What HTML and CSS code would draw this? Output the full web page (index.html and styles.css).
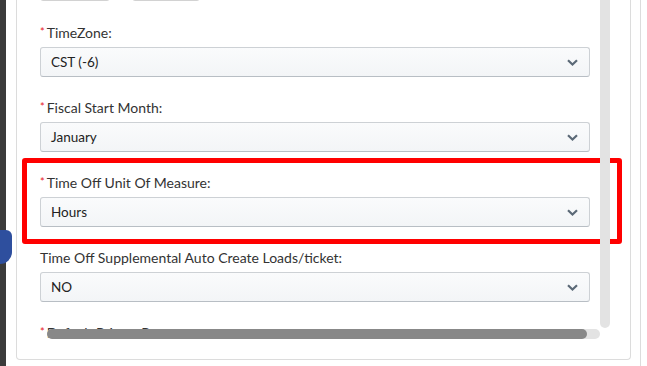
FILE: index.html
```html
<!DOCTYPE html>
<html lang="en">
<head>
    <meta charset="UTF-8">
    <meta name="viewport" content="width=device-width, initial-scale=1.0">
    <title>Settings</title>
    <link rel="stylesheet" href="styles.css">
</head>
<body>
    <div class="strip"></div>
    <div class="gutter"></div>
    <div class="panel">
        <div class="scroll-area">
            <div class="content">
                <div class="btn-row">
                    <div class="btn-box wide"></div>
                    <div class="btn-box"></div>
                </div>

                <div class="field">
                    <div class="label"><span class="req">*</span>TimeZone:</div>
                    <div class="select">
                        <span>CST (-6)</span>
                        <svg class="chevron" width="11" height="7" viewBox="0 0 11 7"><path d="M1 1.2 L5.5 5.5 L10 1.2" fill="none" stroke="#5b6977" stroke-width="2.2"/></svg>
                    </div>
                </div>

                <div class="field">
                    <div class="label"><span class="req">*</span>Fiscal Start Month:</div>
                    <div class="select">
                        <span>January</span>
                        <svg class="chevron" width="11" height="7" viewBox="0 0 11 7"><path d="M1 1.2 L5.5 5.5 L10 1.2" fill="none" stroke="#5b6977" stroke-width="2.2"/></svg>
                    </div>
                </div>

                <div class="field highlighted">
                    <div class="label"><span class="req">*</span>Time Off Unit Of Measure:</div>
                    <div class="select">
                        <span>Hours</span>
                        <svg class="chevron" width="11" height="7" viewBox="0 0 11 7"><path d="M1 1.2 L5.5 5.5 L10 1.2" fill="none" stroke="#5b6977" stroke-width="2.2"/></svg>
                    </div>
                    <div class="red-box"></div>
                </div>

                <div class="field">
                    <div class="label">Time Off Supplemental Auto Create Loads/ticket:</div>
                    <div class="select">
                        <span>NO</span>
                        <svg class="chevron" width="11" height="7" viewBox="0 0 11 7"><path d="M1 1.2 L5.5 5.5 L10 1.2" fill="none" stroke="#5b6977" stroke-width="2.2"/></svg>
                    </div>
                </div>

                <div class="field">
                    <div class="label"><span class="req">*</span>Default Printer Preset:</div>
                </div>
            </div>
            <div class="vscroll"></div>
            <div class="hscroll"><div class="hthumb"></div></div>
        </div>
    </div>
    <div class="right-gap"></div>
    <div class="edge"></div>
    <div class="float-tab"></div>
</body>
</html>
```

FILE: styles.css
```css
body {
    margin: 0;
    height: 366px;
    display: flex;
    overflow: hidden;
    background: #fff;
    font-family: "Lato", "Open Sans", sans-serif;
    font-size: 14px;
    color: #333;
}
.strip { width: 6px; background: #3b3b3b; flex-shrink: 0; }
.gutter { width: 10px; flex-shrink: 0; }
.panel {
    width: 615px;
    height: 360px;
    box-sizing: border-box;
    border: 1px solid #dcdcdc;
    border-top: 0;
    border-radius: 0 0 4px 4px;
    padding: 0 20px 20px 23px;
    flex-shrink: 0;
}
.right-gap { width: 9px; flex-shrink: 0; }
.edge { width: 6px; border-left: 1px solid #dcdcdc; flex-shrink: 0; }

/* clip only the bottom so the annotation can stick out sideways */
.scroll-area {
    display: flow-root;
    position: relative;
    width: 570px;
    height: 339px;
    clip-path: inset(-100px -100px 0 -100px);
}
.content { width: 550px; }

.btn-row { display: flex; gap: 22px; height: 30px; margin-top: -29px; margin-bottom: 22px; }
.btn-box {
    width: 68px;
    box-sizing: border-box;
    border: 1px solid #d2d2d2;
    border-radius: 3px;
}
.btn-box.wide { width: 70px; }

.field { margin-bottom: 21px; }
.field.highlighted { position: relative; }
.label { line-height: 20px; height: 20px; margin-bottom: 4px; color: #333; }
.req { color: #e8141b; font-size: 11px; line-height: 1; vertical-align: 2px; margin-right: 2px; }

.select {
    height: 30px;
    box-sizing: border-box;
    display: flex;
    align-items: center;
    justify-content: space-between;
    padding: 0 11px 0 10px;
    border: 1px solid #cdd1d5;
    border-bottom-color: #b8bec4;
    border-radius: 3px;
    background: linear-gradient(#fafbfc, #f3f5f7);
    color: #222;
    font-size: 13.5px;
}
.chevron { display: block; }

/* annotation box */
.red-box {
    position: absolute;
    top: -15px;
    left: -18px;
    right: -32px;
    bottom: -17px;
    border: 5px solid #ff0000;
    border-radius: 3px;
}

.vscroll {
    position: absolute;
    top: 0;
    right: 0;
    width: 10px;
    bottom: 11px;
    background: #e3e3e3;
    border-radius: 0 0 5px 5px;
}
.hscroll {
    position: absolute;
    left: 7px;
    bottom: 0;
    width: 553px;
    height: 10px;
    background: #e3e3e3;
    border-radius: 5px;
}
.hthumb { width: 540px; height: 10px; background: #888; border-radius: 5px; }

.float-tab {
    position: absolute;
    left: 0;
    top: 230px;
    width: 12px;
    height: 34px;
    background: #2e4f9e;
    border-radius: 0 6px 12px 0;
}
```
